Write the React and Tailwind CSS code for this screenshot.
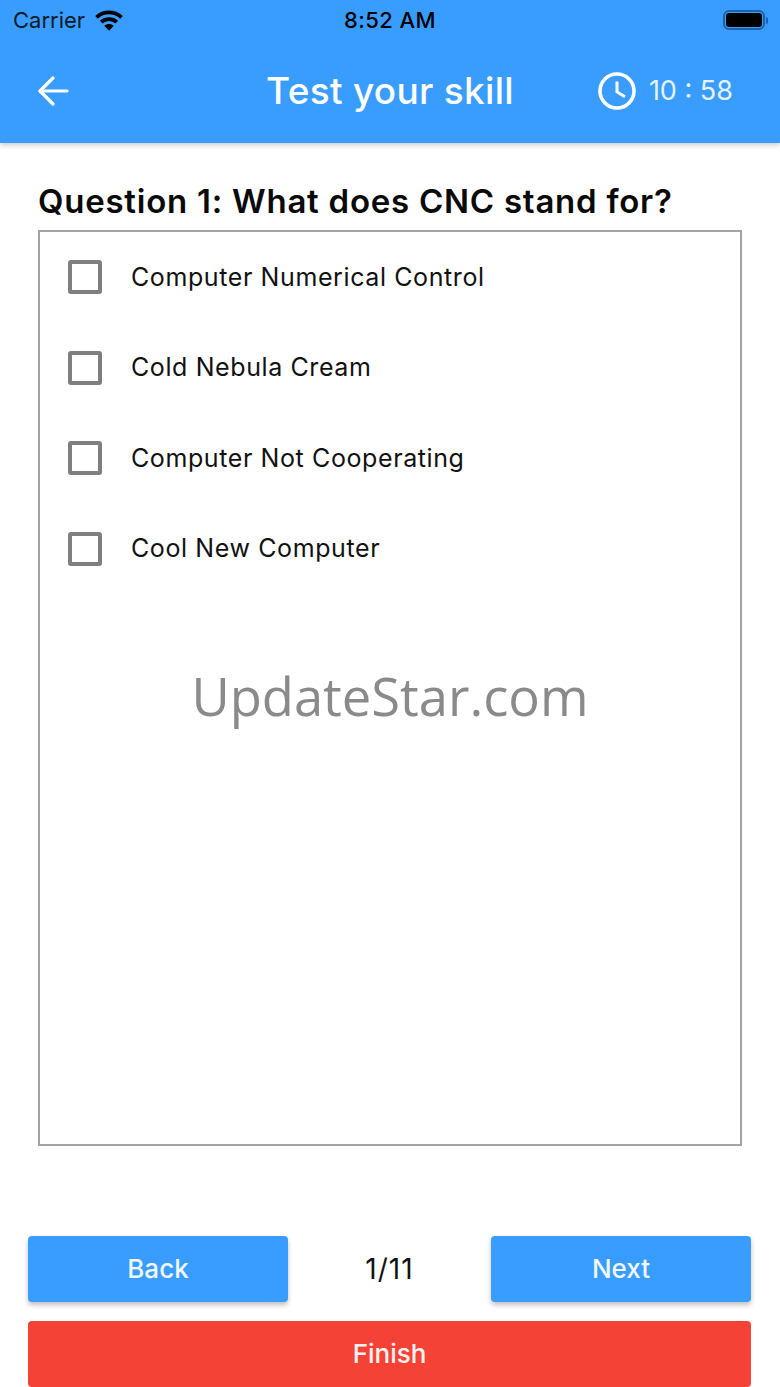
import { useState } from "react";

const answers = [
  "Computer Numerical Control",
  "Cold Nebula Cream",
  "Computer Not Cooperating",
  "Cool New Computer",
];

function StatusBar() {
  return (
    <div className="flex h-[40px] items-center justify-between pl-[13px] pr-[12px] text-black">
      <div className="flex w-[200px] items-center gap-[10px]">
        <span className="text-[22px] leading-none text-[#0b1a2a] font-normal">Carrier</span>
        <svg width="28" height="21" viewBox="0 0 28 21" fill="none" stroke="#000" strokeWidth="3.8">
          <path d="M1.500 7.400C8.600 0.800 19.400 0.800 26.500 7.400" />
          <path d="M6.200 12.200C10.600 8.200 17.400 8.200 21.800 12.200" />
          <path d="M14 20.800L9.200 15.800C12 13.300 16 13.300 18.800 15.800Z" fill="#000" stroke="none" />
        </svg>
      </div>
      <span className="-ml-[1px] text-[22px] leading-none font-medium tracking-[0.4px]">8:52 AM</span>
      <div className="flex w-[200px] items-center justify-end">
        <div className="flex h-[20px] w-[42px] items-center justify-center rounded-[6px] border-[2px] border-[#1d62a8]">
          <div className="h-[14px] w-[36px] rounded-[3px] bg-black" />
        </div>
        <div className="ml-[1px] h-[7px] w-[2px] rounded-r-sm bg-[#1d62a8]" />
      </div>
    </div>
  );
}

function AppBar() {
  return (
    <div className="flex h-[103px] items-center pb-[2px] pl-[37px] pr-[47px] text-white">
      <div className="w-[145px]">
        <svg width="32" height="32" viewBox="0 0 32 32" fill="none" stroke="#fff" strokeWidth="3.2" strokeLinecap="round" strokeLinejoin="round">
          <path d="M30 16H3" />
          <path d="M16 3L3 16l13 13" />
        </svg>
      </div>
      <div className="flex-1 text-center text-[37px] leading-none font-medium tracking-[0.3px] whitespace-nowrap">Test your skill</div>
      <div className="flex w-[135px] items-center justify-end gap-[13px]">
        <svg width="38" height="38" viewBox="0 0 38 38" fill="none" stroke="#fff" className="shrink-0 -ml-[1px]">
          <circle cx="19" cy="19" r="17" strokeWidth="3.6" />
          <path d="M19 9.500V20l8 4.800" strokeWidth="3" />
        </svg>
        <span className="text-[27px] leading-none whitespace-nowrap text-[#e6f2ff]">10 : 58</span>
      </div>
    </div>
  );
}

function Answer({ label }) {
  const [checked, setChecked] = useState(false);

  return (
    <label className="flex h-[90.500px] items-center pl-[28px]">
      <input
        type="checkbox"
        checked={checked}
        onChange={() => setChecked(!checked)}
        className="h-[34px] w-[34px] appearance-none rounded-[3px] border-[4px] border-[#7f7f7f] bg-white"
      />
      <span className="ml-[29px] text-[25px] leading-none tracking-[0.6px] text-[#111]">{label}</span>
    </label>
  );
}

export default function App() {
  return (
    <div className="flex h-[1387px] w-[780px] flex-col overflow-hidden bg-white font-['Inter','Liberation_Sans',sans-serif]">
      <div className="relative z-10 h-[143px] bg-[#399dff] shadow-[0_2px_5px_rgba(0,0,0,0.22)]">
        <StatusBar />
        <AppBar />
      </div>

      <div className="flex flex-1 flex-col px-[38px] pt-[39px]">
        <h1 className="text-[33px] leading-[38px] font-semibold whitespace-nowrap text-[#0a0a0a] tracking-[0.75px]">
          Question 1: What does CNC stand for?
        </h1>
        <div className="relative mt-[10px] h-[916px] border-2 border-[#a3a3a3]">
          {answers.map((answer) => (
            <Answer key={answer} label={answer} />
          ))}
          <div className="absolute top-[438px] left-0 w-full text-center font-['Open_Sans',sans-serif] text-[52.500px] leading-none text-[#8a8a8a]">
            UpdateStar.com
          </div>
        </div>
      </div>

      <div className="flex flex-col gap-[19px] pl-[28px] pr-[29px]">
        <div className="flex items-center justify-between">
          <button className="h-[66px] w-[260px] rounded-[4px] bg-[#399dff] pb-[2px] text-[26px] font-medium text-[#f2f8ff] shadow-[0_3px_5px_rgba(0,0,0,0.25)]">
            Back
          </button>
          <span className="text-[28px] leading-none tracking-[1px] text-[#111]">1/11</span>
          <button className="h-[66px] w-[260px] rounded-[4px] bg-[#399dff] pb-[2px] text-[26px] font-medium text-[#f2f8ff] shadow-[0_3px_5px_rgba(0,0,0,0.25)]">
            Next
          </button>
        </div>
        <button className="h-[66px] w-full rounded-[4px] bg-[#f44336] pb-[2px] text-[26px] font-medium text-[#fff3f2]">
          Finish
        </button>
      </div>
    </div>
  );
}
